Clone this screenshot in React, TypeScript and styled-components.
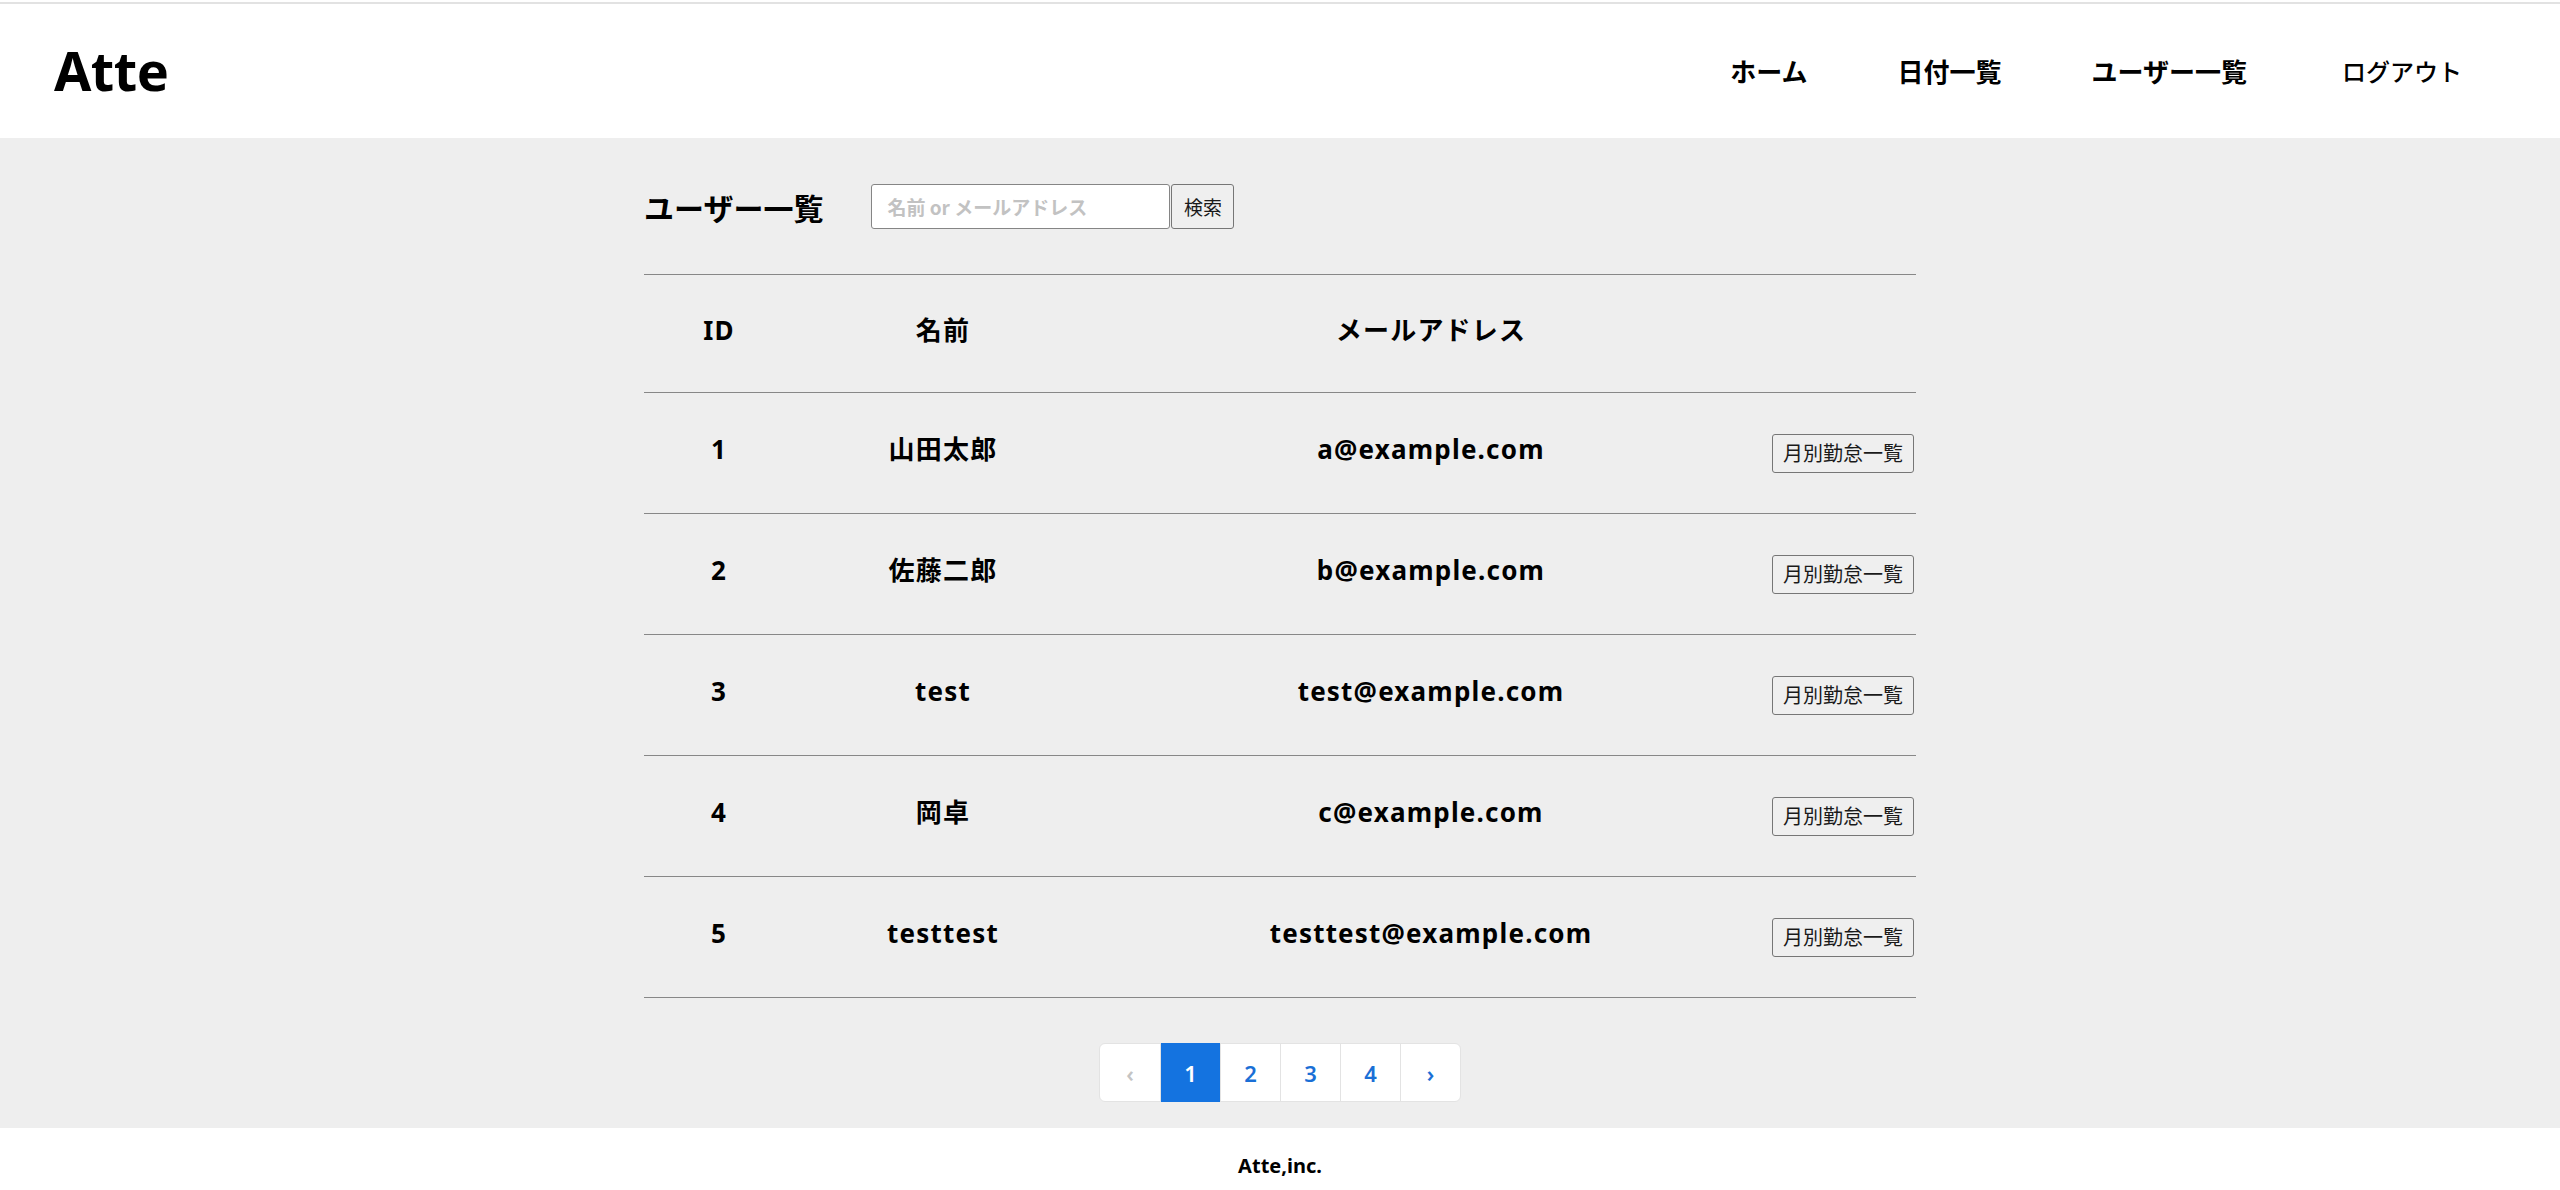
import React from "react";
import styled, { createGlobalStyle } from "styled-components";

const GlobalStyle = createGlobalStyle`
  html, body {
    margin: 0;
    padding: 0;
    overflow: hidden;
    background: #ffffff;
  }
  body {
    font-family: "Noto Sans", "Noto Sans CJK JP", sans-serif;
    color: #000;
  }
  * { box-sizing: border-box; }
`;

const Page = styled.div`
  display: flex;
  flex-direction: column;
  min-height: 100vh;
  padding-top: 2px;
`;

const Header = styled.header`
  height: 136px;
  border-top: 2px solid #e2e2e2;
  background: #fff;
  display: flex;
  align-items: center;
  justify-content: space-between;
  padding: 0 98px 0 54px;
`;

const Logo = styled.h1`
  margin: 0;
  font-size: 54px;
  font-weight: 700;
  line-height: 1;
  letter-spacing: -0.5px;
  padding-bottom: 2px;
`;

const Nav = styled.nav`
  display: flex;
  align-items: center;
  gap: 90px;
`;

const NavLink = styled.a<{ $light?: boolean }>`
  font-family: "Noto Sans CJK JP", sans-serif;
  font-size: ${(p) => (p.$light ? "24px" : "26px")};
  font-weight: ${(p) => (p.$light ? 500 : 700)};
  color: #000;
  text-decoration: none;
  line-height: 1;
  margin-left: ${(p) => (p.$light ? "5px" : "0")};
`;

const Main = styled.main`
  flex: 1;
  background: #eeeeee;
  padding: 46px 0 26px;
`;

const Container = styled.div`
  width: 1272px;
  margin: 0 auto;
`;

const TitleRow = styled.div`
  display: flex;
  align-items: center;
  height: 45px;
  margin-bottom: 45px;
`;

const Title = styled.h2`
  margin: 0 48px 0 0;
  font-family: "Noto Sans CJK JP", sans-serif;
  font-size: 30px;
  font-weight: 700;
  line-height: 1;
`;

const SearchForm = styled.form`
  display: flex;
  align-items: stretch;
  height: 45px;
`;

const SearchInput = styled.input`
  width: 299px;
  height: 45px;
  border: 1px solid #858585;
  border-radius: 3px;
  background: #fff;
  padding: 0 15px;
  font-family: "Noto Sans CJK JP", sans-serif;
  font-size: 19px;
  font-weight: 700;
  outline: none;
  &::placeholder {
    color: #c2c2c2;
  }
`;

const SmallButton = styled.button<{ $size?: number }>`
  font-family: "Noto Sans CJK JP", sans-serif;
  font-size: ${(p) => p.$size ?? 20}px;
  font-weight: 400;
  color: #1a1a1a;
  background: #efefef;
  border: 1px solid #767676;
  border-radius: 3px;
  cursor: pointer;
  line-height: 1;
`;

const SearchButton = styled(SmallButton)`
  width: 63px;
  height: 45px;
  padding: 0;
  margin-left: 1px;
`;

const Table = styled.div`
  border-top: 1px solid #878787;
`;

const Row = styled.div<{ $head?: boolean }>`
  display: grid;
  grid-template-columns: 150px 298px 678px 146px;
  align-items: center;
  height: ${(p) => (p.$head ? "118px" : "121px")};
  border-bottom: 1px solid #878787;
`;

const Cell = styled.div`
  text-align: center;
  font-family: "Noto Sans", "Noto Sans CJK JP", sans-serif;
  font-size: 26px;
  font-weight: 700;
  line-height: 1.2;
  letter-spacing: 1.2px;
  padding-bottom: 6px;
`;

const RowButton = styled(SmallButton)`
  height: 39px;
  width: 142px;
  padding: 0;
  justify-self: center;
`;

const PagerWrap = styled.div`
  display: flex;
  justify-content: center;
  margin-top: 45px;
`;

const Pager = styled.ul`
  display: flex;
  list-style: none;
  margin: 0;
  padding: 0;
  background: #fff;
  border: 1px solid #e3e3e3;
  border-radius: 6px;
  height: 59px;
`;

const PageItem = styled.li<{ $active?: boolean; $disabled?: boolean }>`
  width: 60px;
  display: flex;
  align-items: center;
  justify-content: center;
  font-family: "Noto Sans", sans-serif;
  font-size: 22px;
  font-weight: 600;
  color: ${(p) => (p.$active ? "#fff" : p.$disabled ? "#c4c4c4" : "#1a6fd6")};
  background: ${(p) => (p.$active ? "#1473e0" : "transparent")};
  margin: ${(p) => (p.$active ? "-1px 0" : "0")};
  & + & {
    border-left: 1px solid #e3e3e3;
  }
  &:first-child {
    border-radius: 6px 0 0 6px;
  }
  &:last-child {
    border-radius: 0 6px 6px 0;
  }
`;

const Footer = styled.footer`
  height: 63px;
  background: #fff;
  padding-top: 26px;
  text-align: center;
  font-family: "Noto Sans", sans-serif;
  font-size: 20px;
  font-weight: 700;
  line-height: 24px;
`;

const users = [
  { id: 1, name: "山田太郎", email: "a@example.com" },
  { id: 2, name: "佐藤二郎", email: "b@example.com" },
  { id: 3, name: "test", email: "test@example.com" },
  { id: 4, name: "岡卓", email: "c@example.com" },
  { id: 5, name: "testtest", email: "testtest@example.com" },
];

export default function App() {
  return (
    <>
      <GlobalStyle />
      <Page>
        <Header>
          <Logo>Atte</Logo>
          <Nav>
            <NavLink href="#">ホーム</NavLink>
            <NavLink href="#">日付一覧</NavLink>
            <NavLink href="#">ユーザー一覧</NavLink>
            <NavLink href="#" $light>
              ログアウト
            </NavLink>
          </Nav>
        </Header>
        <Main>
          <Container>
            <TitleRow>
              <Title>ユーザー一覧</Title>
              <SearchForm onSubmit={(e) => e.preventDefault()}>
                <SearchInput placeholder="名前 or メールアドレス" />
                <SearchButton type="submit" $size={19}>
                  検索
                </SearchButton>
              </SearchForm>
            </TitleRow>
            <Table>
              <Row $head>
                <Cell>ID</Cell>
                <Cell>名前</Cell>
                <Cell>メールアドレス</Cell>
                <Cell />
              </Row>
              {users.map((u) => (
                <Row key={u.id}>
                  <Cell>{u.id}</Cell>
                  <Cell>{u.name}</Cell>
                  <Cell>{u.email}</Cell>
                  <RowButton type="button">月別勤怠一覧</RowButton>
                </Row>
              ))}
            </Table>
            <PagerWrap>
              <Pager>
                <PageItem $disabled>‹</PageItem>
                <PageItem $active>1</PageItem>
                <PageItem>2</PageItem>
                <PageItem>3</PageItem>
                <PageItem>4</PageItem>
                <PageItem>›</PageItem>
              </Pager>
            </PagerWrap>
          </Container>
        </Main>
        <Footer>Atte,inc.</Footer>
      </Page>
    </>
  );
}
